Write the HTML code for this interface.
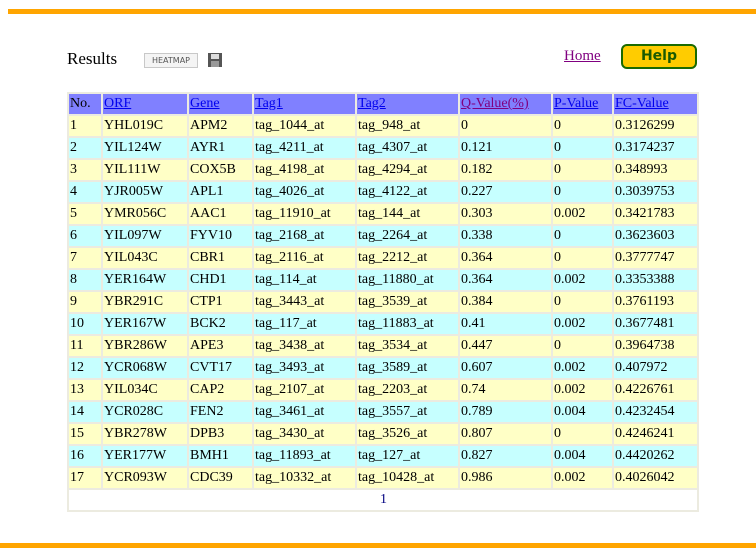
<!DOCTYPE html>
<html><head><style>
body{margin:0;width:756px;height:560px;background:#fff;position:relative;font-family:"Liberation Serif",serif;overflow:hidden}
.bar{position:absolute;background:#ffa500;height:5px}
table{position:absolute;left:67px;top:92px;width:630px;border-collapse:collapse;table-layout:fixed;font-size:14px;border-right:1px solid #b0aca0;border-bottom:1px solid #b0aca0}
tr{height:22px}
td{border:2px solid #ecebe0;padding:0 0 0 1px;white-space:nowrap;overflow:hidden;line-height:18px}
tr.h td{background:#8080ff}
tr.y td{background:#ffffc6}
tr.c td{background:#c6ffff}
a{color:#0000ee;text-decoration:underline}
.pg td{background:#fff;text-align:center;color:#000080}
</style></head><body>
<div class="bar" style="left:8px;top:9px;width:748px"></div>
<div class="bar" style="left:0;top:543px;width:756px"></div>
<div style="position:absolute;left:67px;top:49px;font-size:17px">Results</div>
<div style="position:absolute;left:144px;top:53px;width:52px;height:13px;border:1px solid #c8c8c8;background:#f4f4f4;font-family:'DejaVu Sans',sans-serif;font-size:8px;line-height:13px;text-align:center;color:#555">HEATMAP</div>
<svg style="position:absolute;left:208px;top:53px" width="14" height="14"><rect x="0" y="0" width="14" height="14" fill="#555"/><rect x="3" y="1" width="8" height="5" fill="#ddd"/><rect x="3" y="8" width="8" height="6" fill="#999"/></svg>
<a style="position:absolute;left:564px;top:48px;font-size:15px;color:#800080">Home</a>
<div style="position:absolute;left:621px;top:44px;width:72px;height:21px;border:2px solid #1a6a00;border-radius:6px;background:#ffcc00;color:#1a5a00;font-family:'DejaVu Sans',sans-serif;font-weight:bold;font-size:14px;text-align:center;line-height:21px">Help</div>
<table>
<colgroup><col style="width:34px"><col style="width:86px"><col style="width:65px"><col style="width:103px"><col style="width:103px"><col style="width:93px"><col style="width:61px"><col style="width:85px"></colgroup>
<tr class="h"><td>No.</td><td><a>ORF</a></td><td><a>Gene</a></td><td><a>Tag1</a></td><td><a>Tag2</a></td><td><a style="color:#800080">Q-Value(%)</a></td><td><a>P-Value</a></td><td><a>FC-Value</a></td></tr>
<tr class="y"><td>1</td><td>YHL019C</td><td>APM2</td><td>tag_1044_at</td><td>tag_948_at</td><td>0</td><td>0</td><td>0.3126299</td></tr>
<tr class="c"><td>2</td><td>YIL124W</td><td>AYR1</td><td>tag_4211_at</td><td>tag_4307_at</td><td>0.121</td><td>0</td><td>0.3174237</td></tr>
<tr class="y"><td>3</td><td>YIL111W</td><td>COX5B</td><td>tag_4198_at</td><td>tag_4294_at</td><td>0.182</td><td>0</td><td>0.348993</td></tr>
<tr class="c"><td>4</td><td>YJR005W</td><td>APL1</td><td>tag_4026_at</td><td>tag_4122_at</td><td>0.227</td><td>0</td><td>0.3039753</td></tr>
<tr class="y"><td>5</td><td>YMR056C</td><td>AAC1</td><td>tag_11910_at</td><td>tag_144_at</td><td>0.303</td><td>0.002</td><td>0.3421783</td></tr>
<tr class="c"><td>6</td><td>YIL097W</td><td>FYV10</td><td>tag_2168_at</td><td>tag_2264_at</td><td>0.338</td><td>0</td><td>0.3623603</td></tr>
<tr class="y"><td>7</td><td>YIL043C</td><td>CBR1</td><td>tag_2116_at</td><td>tag_2212_at</td><td>0.364</td><td>0</td><td>0.3777747</td></tr>
<tr class="c"><td>8</td><td>YER164W</td><td>CHD1</td><td>tag_114_at</td><td>tag_11880_at</td><td>0.364</td><td>0.002</td><td>0.3353388</td></tr>
<tr class="y"><td>9</td><td>YBR291C</td><td>CTP1</td><td>tag_3443_at</td><td>tag_3539_at</td><td>0.384</td><td>0</td><td>0.3761193</td></tr>
<tr class="c"><td>10</td><td>YER167W</td><td>BCK2</td><td>tag_117_at</td><td>tag_11883_at</td><td>0.41</td><td>0.002</td><td>0.3677481</td></tr>
<tr class="y"><td>11</td><td>YBR286W</td><td>APE3</td><td>tag_3438_at</td><td>tag_3534_at</td><td>0.447</td><td>0</td><td>0.3964738</td></tr>
<tr class="c"><td>12</td><td>YCR068W</td><td>CVT17</td><td>tag_3493_at</td><td>tag_3589_at</td><td>0.607</td><td>0.002</td><td>0.407972</td></tr>
<tr class="y"><td>13</td><td>YIL034C</td><td>CAP2</td><td>tag_2107_at</td><td>tag_2203_at</td><td>0.74</td><td>0.002</td><td>0.4226761</td></tr>
<tr class="c"><td>14</td><td>YCR028C</td><td>FEN2</td><td>tag_3461_at</td><td>tag_3557_at</td><td>0.789</td><td>0.004</td><td>0.4232454</td></tr>
<tr class="y"><td>15</td><td>YBR278W</td><td>DPB3</td><td>tag_3430_at</td><td>tag_3526_at</td><td>0.807</td><td>0</td><td>0.4246241</td></tr>
<tr class="c"><td>16</td><td>YER177W</td><td>BMH1</td><td>tag_11893_at</td><td>tag_127_at</td><td>0.827</td><td>0.004</td><td>0.4420262</td></tr>
<tr class="y"><td>17</td><td>YCR093W</td><td>CDC39</td><td>tag_10332_at</td><td>tag_10428_at</td><td>0.986</td><td>0.002</td><td>0.4026042</td></tr>
<tr class="pg"><td colspan="8">1</td></tr>
</table>
</body></html>
